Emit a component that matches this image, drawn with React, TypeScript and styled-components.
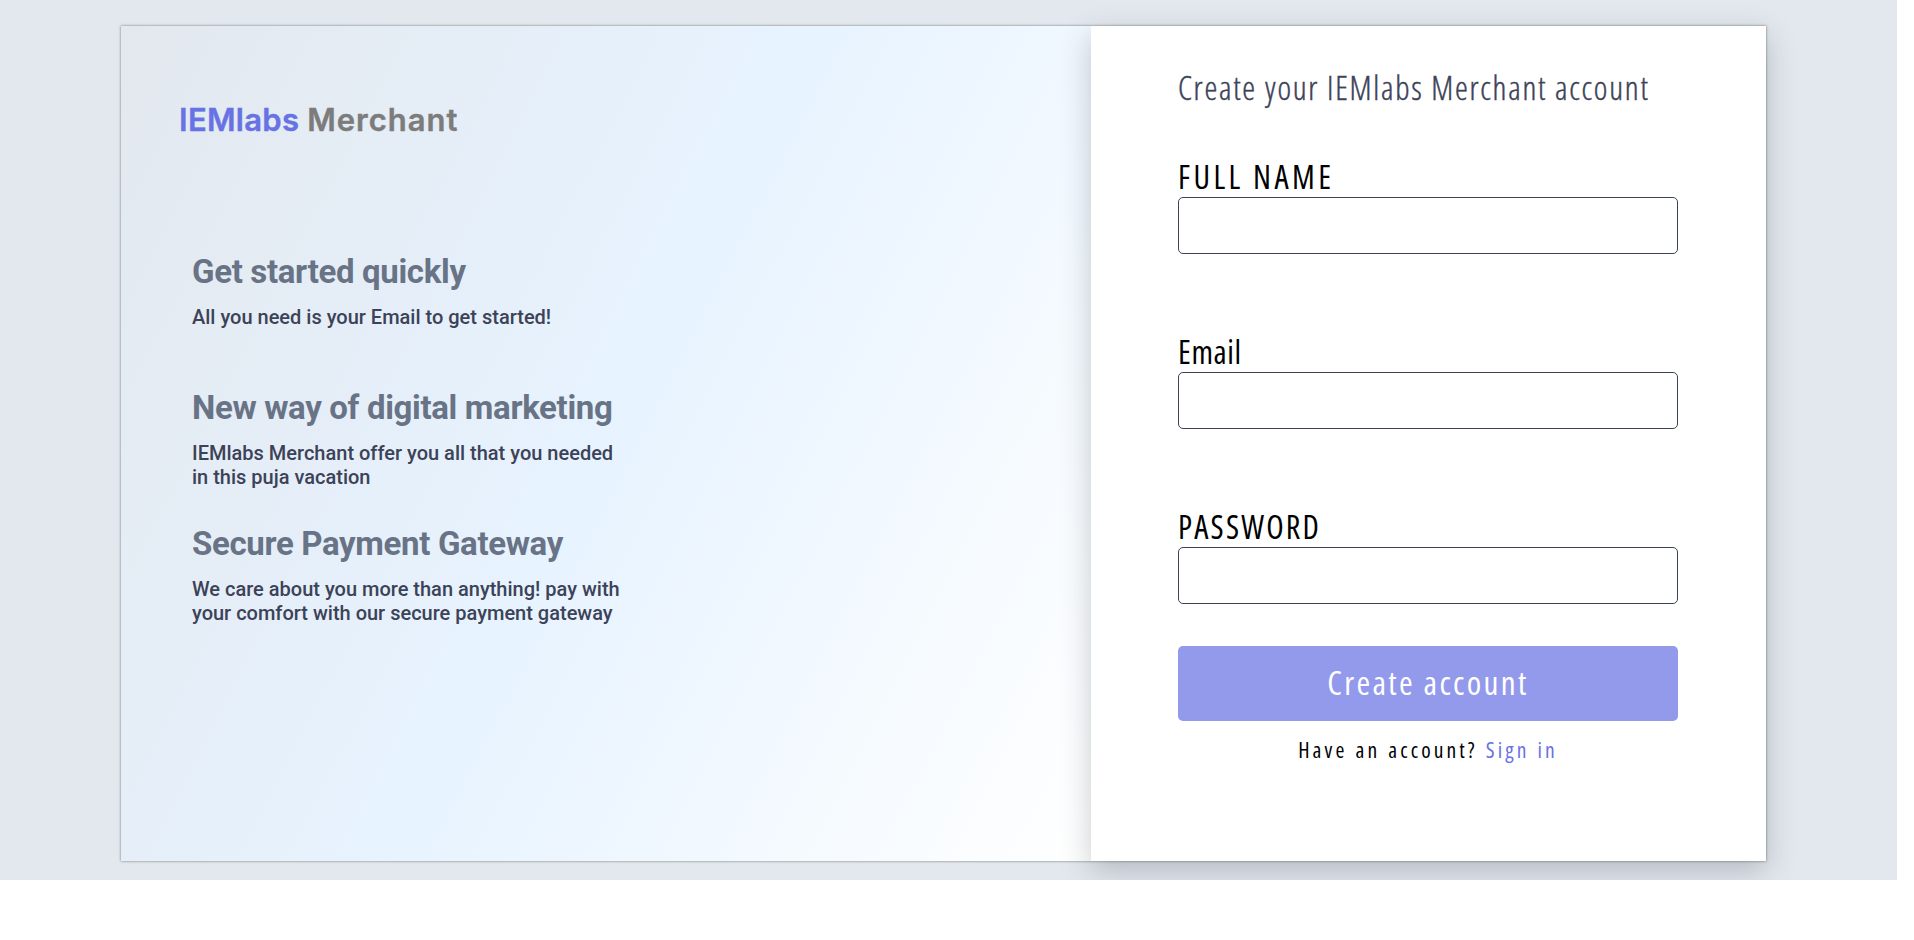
import React from 'react';
import styled, { createGlobalStyle } from 'styled-components';

const GlobalStyle = createGlobalStyle`
  *, *::before, *::after { box-sizing: border-box; }
  body { margin: 0; background: #fff; font-family: Roboto, sans-serif; }
  h1, h2, h3, p { margin: 0; }
`;

const hand = `'Open Sans', 'Noto Sans', sans-serif`;

const Page = styled.main`
  width: 1897px;
  height: 880px;
  padding: 26px 131px 19px 121px;
  background: #e3e8ee;
  overflow: hidden;
`;

const Card = styled.div`
  display: flex;
  width: 1645px;
  height: 835px;
  border-radius: 2px;
  box-shadow: 0 0 2px 1px rgba(90, 95, 90, 0.4);
`;

const Intro = styled.section`
  flex: 1;
  padding: 70px 0 0 58px;
  background: linear-gradient(117deg, #e3e8ee 0%, #e7f3ff 50%, #ffffff 100%);
`;

const Logo = styled.h1`
  height: 48px;
  font: 600 31px/48px Inter, sans-serif;
  letter-spacing: 1px;
  color: #7c7c7c;
  -webkit-text-stroke: 0.4px currentColor;
  span { letter-spacing: 0.3px; color: #6772e5; margin-right: -1px; }
`;

const Features = styled.div`
  margin: 101px 0 0 13px;
`;

const Feature = styled.article`
  height: 136px;
  width: 440px;
`;

const FeatureTitle = styled.h2`
  height: 52px;
  font: 700 33px/53px Roboto, sans-serif;
  letter-spacing: -0.34px;
  white-space: nowrap;
  color: #697386;
`;

const FeatureText = styled.p`
  padding-top: 8px;
  font: 500 20px/24px Roboto, sans-serif;
  white-space: pre-line;
  color: #3c4257;
`;

const Panel = styled.section`
  position: relative;
  width: 675px;
  padding: 40px 88px 0 87px;
  background: #fff;
  box-shadow: 0 10px 28px rgba(40, 50, 60, 0.25);
`;

const PanelTitle = styled.h2`
  height: 44px;
  font: 300 32.5px/44px ${hand};
  font-stretch: 75%;
  letter-spacing: 1.74px;
  white-space: nowrap;
  color: #3c4257;
  -webkit-text-stroke: 0.4px currentColor;
`;

const Form = styled.form`
  display: flex;
  flex-direction: column;
  padding-top: 44px;
`;

const Field = styled.label<{ $spacing: number }>`
  display: flex;
  flex-direction: column;
  height: 175px;
  font: 400 32px/45px ${hand};
  font-stretch: 75%;
  letter-spacing: ${p => p.$spacing}px;
  color: #000;
`;

const Input = styled.input`
  width: 500px;
  height: 57px;
  margin-top: -2px;
  padding: 0 12px;
  border: 1px solid #3c4257;
  border-radius: 5px;
  background: #fff;
  font: 400 24px ${hand};
  outline: none;
`;

const Submit = styled.button`
  width: 500px;
  height: 75px;
  margin-top: -33px;
  padding: 0 0 3px;
  border: 0;
  border-radius: 5px;
  background: #939aeb;
  color: #fff;
  font: 400 33px ${hand};
  font-stretch: 75%;
  letter-spacing: 2.35px;
`;

const Footer = styled.p`
  padding-top: 14px;
  text-align: center;
  font: 400 21.5px/30px ${hand};
  font-stretch: 75%;
  letter-spacing: 3.1px;
  word-spacing: 1px;
  color: #000;
`;

const Link = styled.a`
  color: #6772e5;
  text-decoration: none;
`;

const features = [
  { title: 'Get started quickly', text: 'All you need is your Email to get started!' },
  { title: 'New way of digital marketing', text: 'IEMlabs Merchant offer you all that you needed\nin this puja vacation' },
  { title: 'Secure Payment Gateway', text: 'We care about you more than anything! pay with\nyour comfort with our secure payment gateway' },
];

const fields = [
  { label: 'FULL NAME', type: 'text', spacing: 3.4 },
  { label: 'Email', type: 'email', spacing: 0.6 },
  { label: 'PASSWORD', type: 'password', spacing: 2.2 },
];

export default function App() {
  return (
    <Page>
      <GlobalStyle />
      <Card>
        <Intro>
          <Logo><span>IEMlabs</span> Merchant</Logo>
          <Features>
            {features.map(f => (
              <Feature key={f.title}>
                <FeatureTitle>{f.title}</FeatureTitle>
                <FeatureText>{f.text}</FeatureText>
              </Feature>
            ))}
          </Features>
        </Intro>
        <Panel>
          <PanelTitle>Create your IEMlabs Merchant account</PanelTitle>
          <Form onSubmit={e => e.preventDefault()}>
            {fields.map(f => (
              <Field key={f.label} $spacing={f.spacing}>
                {f.label}
                <Input type={f.type} />
              </Field>
            ))}
            <Submit type="submit">Create account</Submit>
          </Form>
          <Footer>Have an account? <Link href="#">Sign in</Link></Footer>
        </Panel>
      </Card>
    </Page>
  );
}
